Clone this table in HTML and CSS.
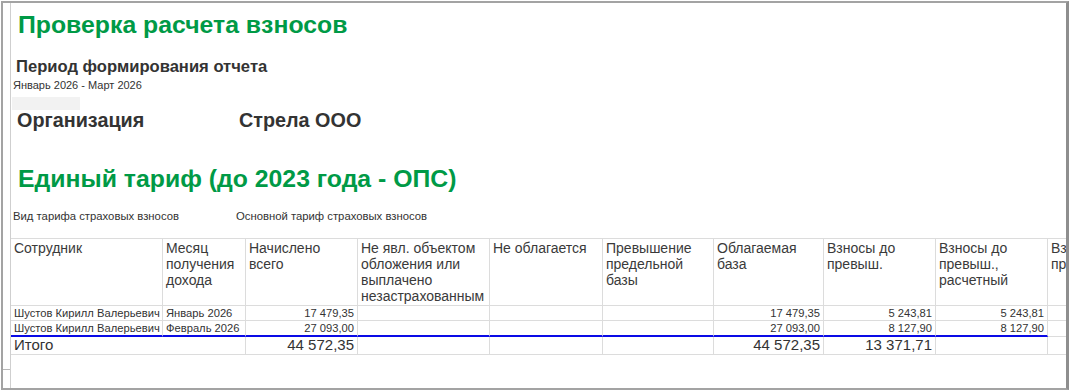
FILE: index.html
```html
<!DOCTYPE html>
<html lang="ru">
<head>
<meta charset="utf-8">
<title>Проверка расчета взносов</title>
<link rel="stylesheet" href="styles.css">
</head>
<body>
<div class="frame">
  <div class="gutter"><div class="gutter-cell"></div></div>
  <div class="sheet">
    <h1 class="title">Проверка расчета взносов</h1>
    <div class="period-label">Период формирования отчета</div>
    <div class="period-value">Январь 2026 - Март 2026</div>
    <div class="blank"></div>
    <div class="org">
      <div class="org-label">Организация</div>
      <div class="org-value">Стрела ООО</div>
    </div>
    <h2 class="title section">Единый тариф (до 2023 года - ОПС)</h2>
    <div class="tariff">
      <div class="tariff-label">Вид тарифа страховых взносов</div>
      <div class="tariff-value">Основной тариф страховых взносов</div>
    </div>
    <div class="grid">
      <div class="cell head">Сотрудник</div>
      <div class="cell head">Месяц получения дохода</div>
      <div class="cell head">Начислено всего</div>
      <div class="cell head">Не явл. объектом обложения или выплачено незастрахованным</div>
      <div class="cell head">Не облагается</div>
      <div class="cell head">Превышение предельной базы</div>
      <div class="cell head">Облагаемая база</div>
      <div class="cell head">Взносы до превыш.</div>
      <div class="cell head">Взносы до превыш., расчетный</div>
      <div class="cell head">Взносы с превыш.</div>

      <div class="cell data">Шустов Кирилл Валерьевич</div>
      <div class="cell data">Январь 2026</div>
      <div class="cell data num">17 479,35</div>
      <div class="cell data"></div>
      <div class="cell data"></div>
      <div class="cell data"></div>
      <div class="cell data num">17 479,35</div>
      <div class="cell data num">5 243,81</div>
      <div class="cell data num">5 243,81</div>
      <div class="cell data"></div>

      <div class="cell data marked">Шустов Кирилл Валерьевич</div>
      <div class="cell data marked">Февраль 2026</div>
      <div class="cell data marked num">27 093,00</div>
      <div class="cell data marked"></div>
      <div class="cell data marked"></div>
      <div class="cell data marked"></div>
      <div class="cell data marked num">27 093,00</div>
      <div class="cell data marked num">8 127,90</div>
      <div class="cell data marked num">8 127,90</div>
      <div class="cell data"></div>

      <div class="cell total span2">Итого</div>
      <div class="cell total num">44 572,35</div>
      <div class="cell total"></div>
      <div class="cell total"></div>
      <div class="cell total"></div>
      <div class="cell total num">44 572,35</div>
      <div class="cell total num">13 371,71</div>
      <div class="cell total"></div>
      <div class="cell total"></div>
    </div>
  </div>
</div>
</body>
</html>
```
FILE: styles.css
```css
html, body {
  margin: 0;
  padding: 0;
  background: #ffffff;
}

body {
  font-family: "Liberation Sans", Arial, sans-serif;
  color: #333333;
}

.frame {
  margin: 1px 0 0 1px;
  width: 1068px;
  height: 389px;
  box-sizing: border-box;
  border: 2px solid #a3a3a3;
  border-right: 3px solid #8e8e8e;
  display: flex;
  overflow: hidden;
}

.gutter {
  width: 8px;
  flex-shrink: 0;
  box-sizing: border-box;
  border-right: 1px solid #cfcfcf;
}

.gutter-cell {
  height: 367px;
  box-sizing: border-box;
  border-bottom: 1px solid #b8b8b8;
}

.sheet {
  flex: 1;
  min-width: 0;
  overflow: hidden;
}

.title {
  margin: 6px 0 0 7px;
  font-size: 24.8px;
  line-height: 31px;
  font-weight: bold;
  color: #009a46;
}

.section {
  margin-top: 33px;
}

.period-label {
  margin: 18px 0 0 5px;
  font-size: 16.6px;
  line-height: 18px;
  font-weight: bold;
  color: #333333;
}

.period-value {
  margin-top: 3px;
  padding-left: 2px;
  font-size: 11px;
  line-height: 13px;
  color: #333333;
}

.blank {
  margin: 5px 0 0 1px;
  width: 68px;
  height: 13px;
  background: #f2f2f2;
}

.org {
  display: flex;
  padding-left: 6px;
  font-size: 19.8px;
  line-height: 20px;
  font-weight: bold;
  color: #333333;
}

.org-label {
  width: 222px;
}

.tariff {
  display: flex;
  margin-top: 16px;
  padding-left: 2px;
  font-size: 11.3px;
  line-height: 13px;
  color: #333333;
}

.tariff-label {
  width: 223px;
}

.grid {
  margin-top: 15px;
  display: grid;
  grid-template-columns: 152px 83px 112px 132px 113px 111px 110px 112px 112px 112px;
  grid-template-rows: 67px 15px 16px 18px;
  width: max-content;
  border-top: 1px solid #dcdcdc;
}

.cell {
  box-sizing: border-box;
  border-right: 1px solid #dcdcdc;
  border-bottom: 1px solid #dcdcdc;
  padding: 0 3px;
  overflow: hidden;
  color: #333333;
}

.head {
  font-size: 14px;
  line-height: 16px;
  padding: 1px 4px 0 3px;
  color: #3a3a3a;
}

.data {
  font-size: 11.2px;
  line-height: 14px;
  white-space: nowrap;
}

.marked {
  border-bottom: 2px solid #0a0ae6;
}

.total {
  font-size: 15px;
  line-height: 16px;
  white-space: nowrap;
}

.span2 {
  grid-column: span 2;
}

.num {
  text-align: right;
}
```
